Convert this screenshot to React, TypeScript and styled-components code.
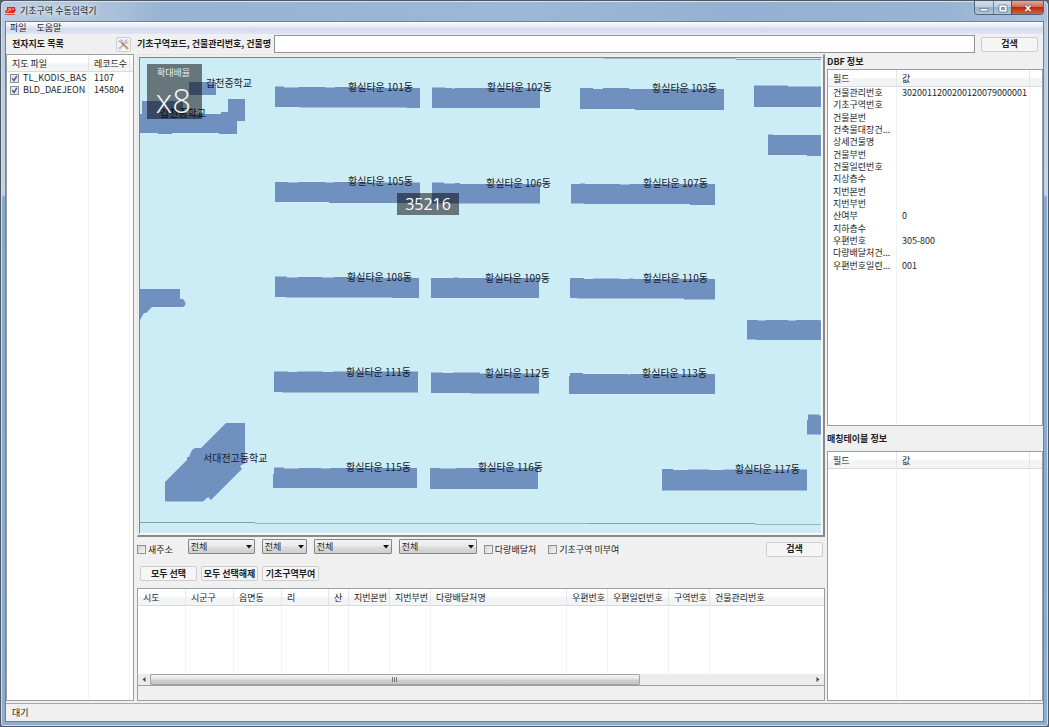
import React from "react";
import styled, { createGlobalStyle } from "styled-components";

const GlobalStyle = createGlobalStyle`
  *, *::before, *::after { box-sizing: border-box; }
  html, body, #root { height: 100%; margin: 0; }
  body {
    background: #5b6068;
    color: #1e1e1e;
    font: 9px/12px "Noto Sans CJK KR", "Noto Sans", sans-serif;
  }
  button, input, select { font: inherit; color: inherit; margin: 0; }
`;

/* ---------- window frame ---------- */

const Window = styled.div`
  display: flex;
  flex-direction: column;
  height: 100vh;
  min-height: 480px;
  padding: 0 4px 4px;
  border: 1px solid #4f5963;
  border-radius: 5px 5px 3px 3px;
  background: linear-gradient(180deg, #b4cae2 0, #c3d4e8 194px, #8aaace 196px, #8caed2 100%);
  box-shadow: inset 0 0 0 1px #c9dbee;
`;

const TitleBar = styled.header`
  display: flex;
  align-items: center;
  height: 20px;
  margin: 0 -3px;
  padding-left: 3px;
  border-radius: 4px 4px 0 0;
  box-shadow: inset 0 1px 0 #d5e2f0;
  background: linear-gradient(90deg, #b9cce1 0, #aac1db 110px, #97b4d3 160px, #9bb8d6 50%, #93b2d3 70%, #96b4d4 90%, #a9c2dc 100%);
`;

const AppTitle = styled.h1`
  margin: 0 auto 0 4px;
  font-size: 9px;
  font-weight: 400;
  text-shadow: 0 0 5px #fff, 0 0 8px #fff;
`;

const WindowButtons = styled.div`
  display: flex;
  align-self: flex-start;
  height: 14px;
  margin-right: 3px;
  border: 1px solid #546578;
  border-top: 0;
  border-radius: 0 0 4px 4px;
  overflow: hidden;
`;

const CaptionButton = styled.button<{ $close?: boolean }>`
  display: grid;
  place-items: center;
  width: ${(p) => (p.$close ? 32 : 18)}px;
  padding: 0;
  border: 0;
  border-left: ${(p) => (p.$close ? "1px solid #6b4040" : "1px solid #71869d")};
  background: ${(p) =>
    p.$close
      ? "linear-gradient(#e3a79b 0, #cf6a55 45%, #b92c12 50%, #d3603c 100%)"
      : "linear-gradient(#d3dfec 0, #bccde0 45%, #9bb2cc 50%, #afc5dc 100%)"};
  &:first-child { border-left: 0; }
`;

const Client = styled.div`
  display: flex;
  flex: 1;
  flex-direction: column;
  min-height: 0;
  border: 1px solid #737f8c;
  background: #f0f0f0;
`;

const MenuBar = styled.nav`
  display: flex;
  gap: 10px;
  height: 12px;
  padding-left: 4px;
  background: linear-gradient(#fdfdfe 0, #e4e8f4 40%, #d3daed 60%, #dfe5f3 100%);
`;

const MenuItem = styled.button`
  padding: 0;
  border: 0;
  background: none;
  line-height: 12px;
`;

/* ---------- tool bar ---------- */

const ToolBar = styled.div`
  display: flex;
  align-items: center;
  height: 20px;
  padding-right: 5px;
`;

const ListHeading = styled.div`
  display: flex;
  align-items: center;
  justify-content: space-between;
  width: 131px;
  padding: 0 6px;
  font-weight: 700;
`;

const ToolButton = styled.button`
  display: grid;
  place-items: center;
  width: 15px;
  height: 15px;
  padding: 0;
  border: 1px solid #cfcfcf;
  border-radius: 2px;
  background: #f3f3f3;
`;

const SearchLabel = styled.label`
  margin-right: 3px;
  font-weight: 700;
  white-space: nowrap;
`;

const SearchInput = styled.input`
  flex: 1;
  min-width: 0;
  height: 18px;
  margin-right: 6px;
  padding: 0 4px;
  border: 1px solid #8f9296;
  background: #fff;
`;

const PushButton = styled.button`
  width: 57px;
  height: 15px;
  padding: 0;
  border: 1px solid #cdcdcd;
  border-radius: 2px;
  background: #f5f5f5;
  font-weight: 700;
  line-height: 12px;
  white-space: nowrap;
`;

/* ---------- panels ---------- */

const Body = styled.main`
  display: flex;
  flex: 1;
  min-height: 0;
`;

const Panel = styled.section<{ $grow?: number }>`
  flex: ${(p) => p.$grow ?? 1} 1 0;
  min-height: 0;
  overflow: hidden;
  border: 1px solid #9a9ea5;
  background: #fff;
`;

const LeftColumn = styled.aside`
  display: flex;
  flex-direction: column;
  width: 128px;
  margin-right: 3px;
`;

const CenterColumn = styled.div`
  display: flex;
  flex: 1;
  flex-direction: column;
  min-width: 0;
`;

const RightColumn = styled.aside`
  display: flex;
  flex-direction: column;
  width: 216px;
  margin-left: 2px;
`;

const PanelTitle = styled.h2<{ $tall?: boolean }>`
  margin: 0;
  height: ${(p) => (p.$tall ? 25 : 15)}px;
  padding-top: 1px;
  font-size: 9px;
  font-weight: 700;
  line-height: ${(p) => (p.$tall ? 24 : 14)}px;
`;

const Table = styled.table`
  width: 100%;
  height: 100%;
  table-layout: fixed;
  border-collapse: separate;
  border-spacing: 0;

  th, td {
    padding: 0 0 0 5px;
    overflow: hidden;
    text-align: left;
    white-space: nowrap;
    font-weight: 400;
    border-right: 1px solid #edf4fc;
  }
  th {
    height: 17px;
    padding-top: 2px;
    border-right-color: #e2e5e9;
    border-bottom: 1px solid #d8dade;
    background: linear-gradient(#fff 45%, #f3f4f6 55%);
  }
  td { height: 12px; }
  tbody tr:nth-child(3n) td { height: 13px; }
  tbody tr:last-child td { height: auto; }
  th:last-child, td:last-child { border-right: 0; }
`;

const LayerLabel = styled.label`
  display: flex;
  align-items: center;
  gap: 4px;
  margin-left: -2px;
`;

const Check = styled.input.attrs({ type: "checkbox" })`
  appearance: none;
  flex: none;
  width: 9px;
  height: 9px;
  border: 1px solid #8e8f8f;
  background: linear-gradient(135deg, #cdd2d8, #f7f8f9);
  &:checked {
    background: url("data:image/svg+xml,%3Csvg xmlns='http://www.w3.org/2000/svg' viewBox='0 0 7 7'%3E%3Cpath d='M1.2 3.2L3 5.6L5.8 .8' fill='none' stroke='%233a4f93' stroke-width='1.3'/%3E%3C/svg%3E") #e4e8ee;
  }
`;

/* ---------- map ---------- */

const MapFrame = styled.section`
  position: relative;
  display: flex;
  flex: 1;
  min-height: 0;
  padding: 2px 1px 1px 1px;
  border: 1px solid #e3e3e3;
  border-width: 1px 2px 2px 1px;
  border-right-color: #8a8a8a;
  border-bottom-color: #8a8a8a;
`;

const MapCanvas = styled.svg`
  flex: 1;
  min-width: 0;
  height: 100%;
  border: 1px solid #7f8484;
  border-right-color: #fff;
  border-bottom-color: #fff;
  background: #ccedf6;
  font-size: 10px;
`;

const ZoomBadge = styled.div`
  position: absolute;
  left: 9px;
  top: 9px;
  width: 55px;
  height: 55px;
  padding: 3px 2px 0 0;
  background: rgba(0, 0, 0, 0.5);
  color: #e4e8e9;
  text-align: center;
`;

const ZoomValue = styled.div`
  color: #f4f6f6;
  font: 300 33px/44px "Open Sans", sans-serif;
`;

const ZoneBadge = styled.div`
  position: absolute;
  left: 259px;
  top: 138px;
  width: 62px;
  height: 22px;
  background: rgba(0, 0, 0, 0.5);
  color: #fff;
  font: 400 16px/22px "Open Sans", sans-serif;
  text-align: center;
`;

/* ---------- filters and result grid ---------- */

const FilterRow = styled.form`
  display: flex;
  align-items: center;
  height: 24px;
  padding-right: 2px;
`;

const CheckLabel = styled.label<{ $gap: number }>`
  display: flex;
  align-items: center;
  gap: 2px;
  margin-right: ${(p) => p.$gap}px;
  padding-top: 1px;
  white-space: nowrap;
`;

const SelectBox = styled.span<{ $width: number }>`
  position: relative;
  width: ${(p) => p.$width}px;
  height: 15px;
  margin-right: 7px;
  margin-bottom: 5px;
`;

const Select = styled.select`
  appearance: none;
  display: block;
  width: 100%;
  height: 15px;
  padding: 0 2px;
  border: 1px solid #858585;
  border-radius: 1px;
  background: linear-gradient(#f2f2f2 0, #ebebeb 48%, #dddddd 52%, #cfcfcf 100%);
  line-height: 12px;
`;

const SelectArrow = styled.svg`
  position: absolute;
  right: 3px;
  top: 6px;
  pointer-events: none;
`;

const Spacer = styled.span`
  flex: 1;
`;

const ActionRow = styled.div`
  display: flex;
  align-items: center;
  gap: 4px;
  height: 27px;
  padding: 0 0 2px 3px;
`;

const ResultPanel = styled.section`
  display: flex;
  flex-direction: column;
  height: 113px;
  border: 1px solid #9a9ea5;
`;

const ResultGrid = styled.div`
  flex: 1;
  min-height: 0;
  background: #fff;
`;

const ScrollBar = styled.div`
  display: flex;
  height: 12px;
  border-bottom: 1px solid #9a9ea5;
  background: #ececec;
`;

const ScrollButton = styled.button`
  display: grid;
  place-items: center;
  width: 12px;
  padding: 0;
  border: 0;
  background: none;
`;

const ScrollTrack = styled.div`
  flex: 1;
`;

const ScrollThumb = styled.div`
  display: grid;
  place-items: center;
  width: 74%;
  height: 11px;
  border: 1px solid #a3a3a3;
  border-radius: 1px;
  background: linear-gradient(#f3f3f3 0, #e4e4e4 45%, #cfcfcf 55%, #c4c4c4 100%);
`;

const ResultFooter = styled.div`
  height: 14px;
`;

const StatusBar = styled.footer`
  height: 18px;
  margin-top: 2px;
  padding-left: 6px;
  border-top: 1px solid #a5a8ac;
  line-height: 17px;
`;

/* ---------- data ---------- */

const dbfRows: [string, string][] = [
  ["건물관리번호", "3020011200200120079000001"],
  ["기초구역번호", ""],
  ["건물본번", ""],
  ["건축물대장건...", ""],
  ["상세건물명", ""],
  ["건물부번", ""],
  ["건물일련번호", ""],
  ["지상층수", ""],
  ["지번본번", ""],
  ["지번부번", ""],
  ["산여부", "0"],
  ["지하층수", ""],
  ["우편번호", "305-800"],
  ["다량배달처건...", ""],
  ["우편번호일련...", "001"],
];

const resultColumns: [string, number?][] = [
  ["시도", 48],
  ["시군구", 48],
  ["읍면동", 48],
  ["리", 47],
  ["산", 20],
  ["지번본번", 41],
  ["지번부번", 41],
  ["다량배달처명", 136],
  ["우편번호", 41],
  ["우편일련번호", 61],
  ["구역번호", 41],
  ["건물관리번호"],
];

const buildings = [
  "M49 24H76V37H49Z",
  "M2 43H43V56H81V54H88V41H105V63H97V76H79V75H32V76H18V75H0V56H2Z",
  "M135 28.5H144V29.5H158V29H185V29.5H195V29H223V30H280V50H267V49.5H160V49H135Z",
  "M292 29.5H305V30H312V30.5H315V30H327V30H400V50H292Z",
  "M440 30H453V31H463V30H489V31H584V52H495V51H440Z",
  "M614 27.5H648V28.5H682V49H614Z",
  "M628 76.5H633V77H682V98H667V97H628Z",
  "M135 124H148V124.5H158V124H185V124.5H194V124H224V124.5H280V145H189V144H135Z",
  "M292 124.5H304V125.5H315V125H320V126H400V145.5H292Z",
  "M431 126H440V125.5H445V126H480V126.5H490V126H575V147H550V146H444V145.5H431Z",
  "M135 218.5H147V219.5H158V219H182V219.5H194V219H221V220H279V240H252V239.5H146V239H135Z",
  "M291 220H314V219.5H318V220H399V240H291Z",
  "M430 220H444V221H453V220.5H480V221H489V220.5H493V221H575V241.5H544V240.5H437V240H430Z",
  "M607 262H618V262.5H626V262H648V262.5H656V262H680V262.5H682V282H616V281.5H607Z",
  "M134 313.5H148V314H157V313.5H183V314H193V313.5H278V334.5H142V334H134Z",
  "M291 314.5H303V315H313V314.5H340V315.5H399V335.5H331V335H291Z",
  "M430 315H443V316H488V316.5H490V316H575V336H429V318H430Z",
  "M668 356.5H679V357.5H682V376.5H667V362H668Z",
  "M134 409.5H144V410.5H159V410H181V410.5H190V410H277V430H133V416H134Z",
  "M290 410H300V410.5H316V410H398V431H290Z",
  "M522 411H533V412H548V411.5H569V412H584V411.5H667V432.5H522Z",
  "M0 231H40V241H43Q48 246 43 249H12L6 255H4L0 262Z",
  "M25 424L47 402V399H49L51 394Q53 390 56 390H61L86 365H105V405L100 408L102 411L71 442L68 439L63 443.5H25Z",
];

const mapLabels: [string, number, number][] = [
  ["갑천중학교", 66, 29],
  ["갑천중학교", 20, 59],
  ["황실타운 101동", 208, 33],
  ["황실타운 102동", 347, 33],
  ["황실타운 103동", 512, 34],
  ["황실타운 105동", 208, 127],
  ["황실타운 106동", 346, 129],
  ["황실타운 107동", 503, 129],
  ["황실타운 108동", 207, 223],
  ["황실타운 109동", 345, 224],
  ["황실타운 110동", 503, 224],
  ["황실타운 111동", 206, 318],
  ["황실타운 112동", 345, 319],
  ["황실타운 113동", 502, 319],
  ["서대전고등학교", 63, 404],
  ["황실타운 115동", 206, 413],
  ["황실타운 116동", 338, 413],
  ["황실타운 117동", 595, 415],
];

/* ---------- pieces ---------- */

function AppLogo() {
  return (
    <svg width="11" height="10" viewBox="0 0 11 10" aria-hidden="true">
      <path d="M2 1H10V3L11 4L9 7H1L0 5L2 4Z" fill="#e8211d" />
      <path d="M3 3H6L5 5M7 3H9M2 6L4 5" stroke="#ffc8bd" fill="none" />
      <path d="M0 8.5H10" stroke="#c9574d" />
    </svg>
  );
}

function ToolsIcon() {
  return (
    <svg width="13" height="13" viewBox="0 0 13 13" fill="none" aria-hidden="true">
      <path d="M2 11L8 5" stroke="#b9bdc3" strokeWidth="1.8" />
      <path d="M8 2.2Q7 5 8.5 5.3Q11 6 11.5 3.5L10 4.3L9 3.4L10 1.6Z" fill="#d3d6da" stroke="#a3a7ad" strokeWidth=".5" />
      <path d="M1.5 3.5L4 1.5L6 3L4.5 5Z" fill="#c4c8ce" stroke="#989ca2" strokeWidth=".5" />
      <path d="M4.5 4.5L7 7" stroke="#6e737b" strokeWidth="1.3" />
      <path d="M7 7L11 11" stroke="#d0935a" strokeWidth="2.2" />
    </svg>
  );
}

function Combo({ width, label }: { width: number; label: string }) {
  return (
    <SelectBox $width={width}>
      <Select aria-label={label}>
        <option>전체</option>
      </Select>
      <SelectArrow width="6" height="4" viewBox="0 0 6 4" aria-hidden="true">
        <path d="M0 0H6L3 3.5Z" fill="#111" />
      </SelectArrow>
    </SelectBox>
  );
}

function FieldTable({ rows }: { rows: [string, string][] }) {
  return (
    <Table>
      <colgroup>
        <col style={{ width: 69 }} />
        <col />
        <col style={{ width: 12 }} />
      </colgroup>
      <thead>
        <tr>
          <th>필드</th>
          <th>값</th>
          <th />
        </tr>
      </thead>
      <tbody>
        {rows.map(([field, value]) => (
          <tr key={field}>
            <td>{field}</td>
            <td>{value}</td>
            <td />
          </tr>
        ))}
        <tr aria-hidden="true">
          <td />
          <td />
          <td />
        </tr>
      </tbody>
    </Table>
  );
}

function ResultTable() {
  return (
    <Table>
      <colgroup>
        {resultColumns.map(([name, width]) => (
          <col key={name} style={{ width }} />
        ))}
      </colgroup>
      <thead>
        <tr>
          {resultColumns.map(([name]) => (
            <th key={name}>{name}</th>
          ))}
        </tr>
      </thead>
      <tbody>
        <tr aria-hidden="true">
          {resultColumns.map(([name]) => (
            <td key={name} />
          ))}
        </tr>
      </tbody>
    </Table>
  );
}

function LayerTable() {
  const layers = [
    ["TL_KODIS_BAS", "1107"],
    ["BLD_DAEJEON", "145804"],
  ];
  return (
    <Table>
      <colgroup>
        <col style={{ width: 82 }} />
        <col style={{ width: 41 }} />
        <col />
      </colgroup>
      <thead>
        <tr>
          <th>지도 파일</th>
          <th>레코드수</th>
          <th />
        </tr>
      </thead>
      <tbody>
        {layers.map(([name, count]) => (
          <tr key={name}>
            <td>
              <LayerLabel>
                <Check defaultChecked />
                {name}
              </LayerLabel>
            </td>
            <td>{count}</td>
            <td />
          </tr>
        ))}
        <tr aria-hidden="true">
          <td />
          <td />
          <td />
        </tr>
      </tbody>
    </Table>
  );
}

function MapView() {
  return (
    <MapFrame aria-label="전자지도">
      <MapCanvas>
        <g fill="#7090c0">
          {buildings.map((d) => (
            <path key={d} d={d} />
          ))}
        </g>
        <g fill="none" stroke="#8c9fa1">
          <path d="M0 464.5H115M448 465.5H615" />
          <path d="M115 465.5H281M281 465.5H448" stroke="#9cb2b6" />
          <path d="M615 466.5H682" stroke="#9cb2b6" />
          <path d="M464 .5H596" stroke="#a5bcc0" />
          <path d="M596 1.5H682" />
        </g>
        <g fill="#14202a">
          {mapLabels.map(([text, x, y]) => (
            <text key={`${text}-${x}`} x={x} y={y}>
              {text}
            </text>
          ))}
        </g>
      </MapCanvas>
      <ZoomBadge>
        확대배율
        <ZoomValue>x8</ZoomValue>
      </ZoomBadge>
      <ZoneBadge>35216</ZoneBadge>
    </MapFrame>
  );
}

export default function App() {
  return (
    <>
      <GlobalStyle />
      <Window>
        <TitleBar>
          <AppLogo />
          <AppTitle>기초구역 수동입력기</AppTitle>
          <WindowButtons>
            <CaptionButton aria-label="최소화">
              <svg width="10" height="10" viewBox="0 0 10 10">
                <rect x="1" y="5.5" width="8" height="2.5" fill="#fff" stroke="#5f6d7c" strokeWidth=".7" />
              </svg>
            </CaptionButton>
            <CaptionButton aria-label="최대화">
              <svg width="10" height="10" viewBox="0 0 10 10">
                <path d="M1 2H9V9H1ZM3.5 4.5V6.5H6.5V4.5Z" fill="#fff" fillRule="evenodd" stroke="#5f6d7c" strokeWidth=".7" />
              </svg>
            </CaptionButton>
            <CaptionButton $close aria-label="닫기">
              <svg width="10" height="10" viewBox="0 0 10 10">
                <path d="M1 2H3.5L5 3.8L6.5 2H9L6.4 5.2L9 8.5H6.5L5 6.7L3.5 8.5H1L3.6 5.2Z" fill="#fff" stroke="#6b4a4a" strokeWidth=".6" />
              </svg>
            </CaptionButton>
          </WindowButtons>
        </TitleBar>
        <Client>
          <MenuBar>
            <MenuItem>파일</MenuItem>
            <MenuItem>도움말</MenuItem>
          </MenuBar>
          <ToolBar>
            <ListHeading>
              전자지도 목록
              <ToolButton aria-label="설정">
                <ToolsIcon />
              </ToolButton>
            </ListHeading>
            <SearchLabel htmlFor="keyword">기초구역코드, 건물관리번호, 건물명</SearchLabel>
            <SearchInput id="keyword" />
            <PushButton>검색</PushButton>
          </ToolBar>
          <Body>
            <LeftColumn>
              <Panel>
                <LayerTable />
              </Panel>
            </LeftColumn>
            <CenterColumn>
              <MapView />
              <FilterRow onSubmit={(e) => e.preventDefault()}>
                <CheckLabel $gap={15}>
                  <Check />
                  새주소
                </CheckLabel>
                <Combo width={67} label="시도" />
                <Combo width={45} label="시군구" />
                <Combo width={78} label="읍면동" />
                <Combo width={78} label="리" />
                <CheckLabel $gap={12}>
                  <Check />
                  다량배달처
                </CheckLabel>
                <CheckLabel $gap={0}>
                  <Check />
                  기초구역 미부여
                </CheckLabel>
                <Spacer />
                <PushButton>검색</PushButton>
              </FilterRow>
              <ActionRow>
                <PushButton>모두 선택</PushButton>
                <PushButton>모두 선택해제</PushButton>
                <PushButton>기초구역부여</PushButton>
              </ActionRow>
              <ResultPanel>
                <ResultGrid>
                  <ResultTable />
                </ResultGrid>
                <ScrollBar>
                  <ScrollButton aria-label="왼쪽으로">
                    <svg width="4" height="5" viewBox="0 0 4 5">
                      <path d="M3.5 0V5L.5 2.5Z" fill="#444" />
                    </svg>
                  </ScrollButton>
                  <ScrollTrack>
                    <ScrollThumb>
                      <svg width="6" height="5" viewBox="0 0 6 5">
                        <path d="M.5 0V5M2.5 0V5M4.5 0V5" stroke="#777" />
                      </svg>
                    </ScrollThumb>
                  </ScrollTrack>
                  <ScrollButton aria-label="오른쪽으로">
                    <svg width="4" height="5" viewBox="0 0 4 5">
                      <path d="M.5 0V5L3.5 2.5Z" fill="#444" />
                    </svg>
                  </ScrollButton>
                </ScrollBar>
                <ResultFooter />
              </ResultPanel>
            </CenterColumn>
            <RightColumn>
              <PanelTitle>DBF 정보</PanelTitle>
              <Panel $grow={10}>
                <FieldTable rows={dbfRows} />
              </Panel>
              <PanelTitle $tall>매칭테이블 정보</PanelTitle>
              <Panel $grow={7}>
                <FieldTable rows={[]} />
              </Panel>
            </RightColumn>
          </Body>
          <StatusBar>대기</StatusBar>
        </Client>
      </Window>
    </>
  );
}
